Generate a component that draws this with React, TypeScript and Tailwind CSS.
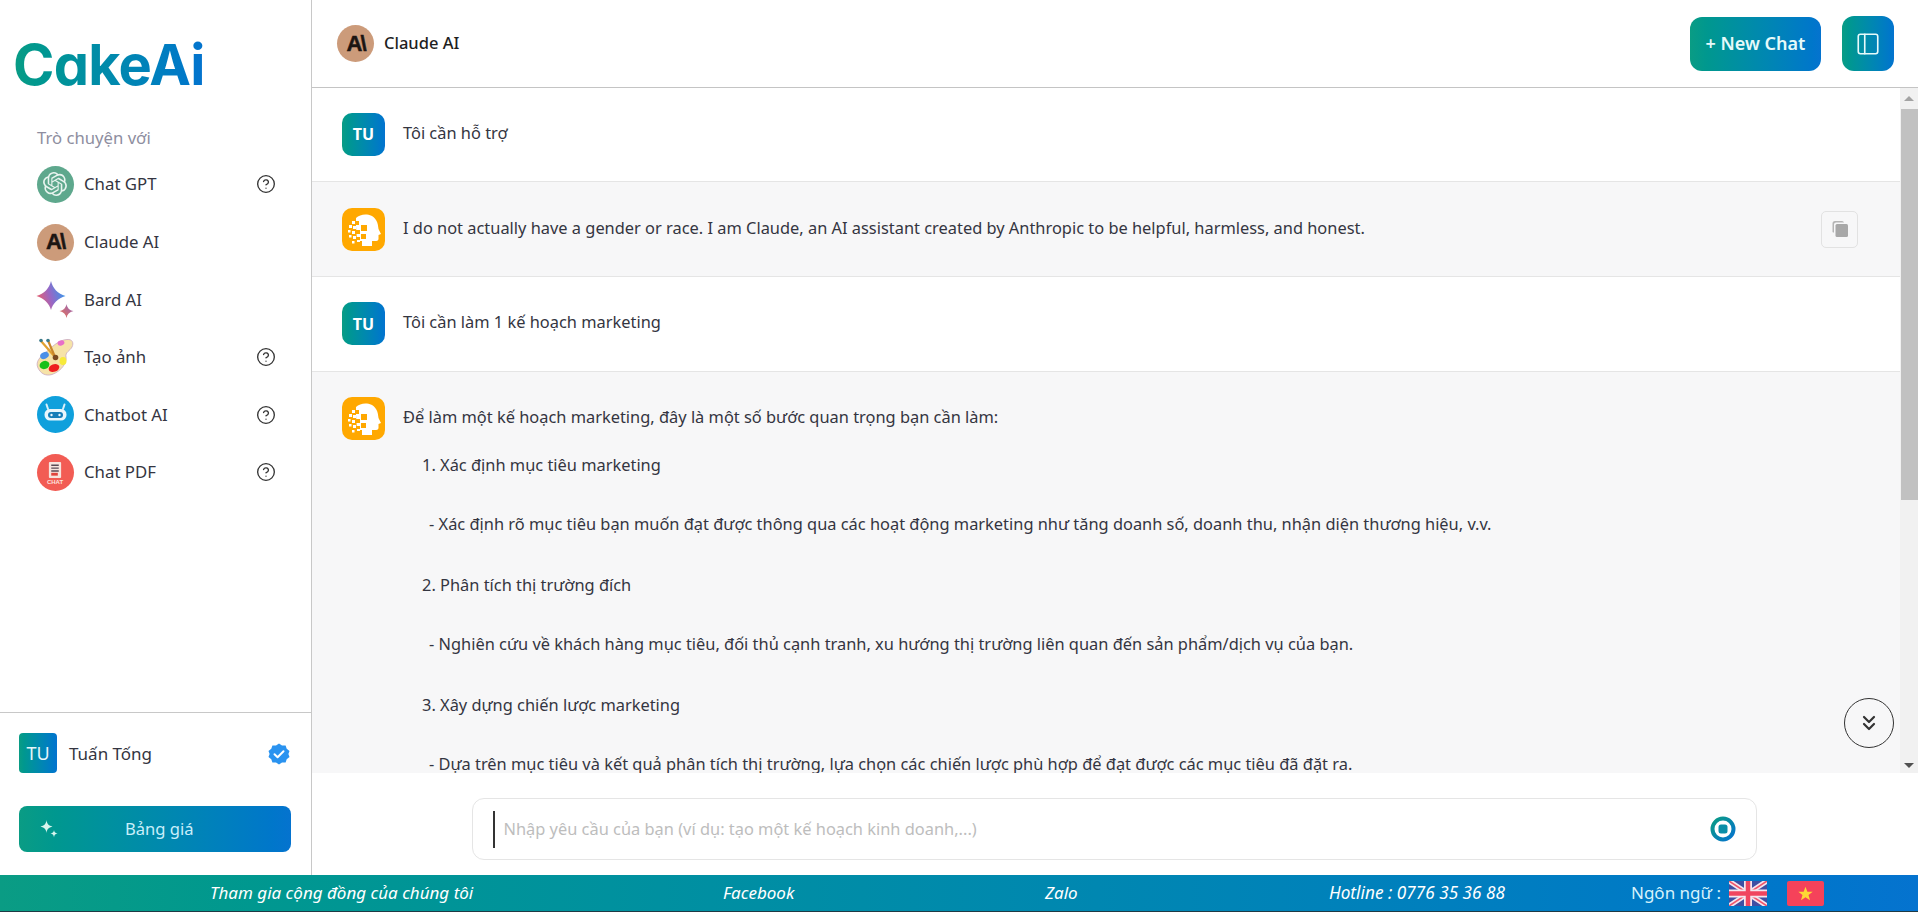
import React from 'react';
import { CircleHelp, ChevronsDown, PanelLeft } from 'lucide-react';
import { SiOpenai } from 'react-icons/si';

const ClaudeLogo = () => (
  <div className="w-[37px] h-[37px] rounded-full bg-[#cc9b7a] flex items-center justify-center">
    <span className="text-[#1c1512] text-[22px] font-bold tracking-[-2px] leading-none [-webkit-text-stroke:0.5px_#1c1512] font-['Liberation_Sans',sans-serif]">A\</span>
  </div>
);

const GptLogo = () => (
  <div className="w-[37px] h-[37px] rounded-full bg-[#5ea88d] flex items-center justify-center">
    <SiOpenai className="w-[24px] h-[24px] text-[#e8f4ef]" />
  </div>
);

const BardLogo = () => (
  <svg width="38" height="38" viewBox="0 0 38 38">
    <defs>
      <linearGradient id="bardA" x1="0" y1="0.6" x2="1" y2="0.3">
        <stop offset="0" stopColor="#ea5f6a" />
        <stop offset="0.45" stopColor="#9a66c4" />
        <stop offset="1" stopColor="#2f9bee" />
      </linearGradient>
      <linearGradient id="bardB" x1="0" y1="1" x2="1" y2="0">
        <stop offset="0" stopColor="#ee7050" />
        <stop offset="1" stopColor="#9168c0" />
      </linearGradient>
    </defs>
    <path d="M15 0 C16.500 7 22 13 29.500 15 C22 17 16.500 23 15 29 C13.500 23 8 17 0.500 15 C8 13 13.500 7 15 0Z" fill="url(#bardA)" />
    <path d="M30.500 23 C31 26.500 33.500 29.500 37.500 30 C33.500 31 31 33.500 30.500 37 C30 33.500 27.500 31 23.500 30 C27.500 29.500 30 26.500 30.500 23Z" fill="url(#bardB)" />
  </svg>
);

const PaletteLogo = () => (
  <svg width="38" height="38" viewBox="0 0 38 38">
    <path d="M2 30 C-1 24 4 19 9 15 C15 10 22 2 31 1.500 C36.500 1 38 5 36 9 C34 13 29 14 30 19 C31 24 26 33 16 36.500 C9 38.500 4.500 35 2 30Z" fill="#f6e3a8" stroke="#c9a8c0" strokeWidth="0.8" />
    <ellipse cx="8.500" cy="17.500" rx="4.500" ry="3.300" fill="#4a8fe8" transform="rotate(-25 8.500 17.500)" />
    <ellipse cx="8.500" cy="27" rx="5" ry="4" fill="#18c018" transform="rotate(-20 8.500 27)" />
    <ellipse cx="18" cy="30" rx="5.500" ry="3.800" fill="#ee2020" transform="rotate(-20 18 30)" />
    <ellipse cx="27" cy="23" rx="3.500" ry="4" fill="#f7ea3a" />
    <ellipse cx="25" cy="5" rx="3.500" ry="2.500" fill="#e86fc8" transform="rotate(-15 25 5)" />
    <path d="M5 3 L19 19" stroke="#e0a030" strokeWidth="2.200" />
    <path d="M12 2.500 L19 19" stroke="#c8862a" strokeWidth="2.200" />
    <circle cx="19.500" cy="19.500" r="2.800" fill="#7a4a20" />
    <circle cx="5" cy="2.500" r="1.800" fill="#3a7a8a" />
    <circle cx="12" cy="2.500" r="1.800" fill="#3a7a8a" />
  </svg>
);

const ChatbotLogo = () => (
  <svg width="37" height="37" viewBox="0 0 37 37">
    <circle cx="18.500" cy="18.500" r="18.500" fill="#0fa0dc" />
    <path d="M9.500 8.500 L11 13 M27.500 8.500 L26 13" stroke="#d8f0fa" strokeWidth="2" strokeLinecap="round" />
    <rect x="7.500" y="13" width="22" height="11.500" rx="5.500" fill="#e8f6fc" />
    <rect x="11" y="16" width="15" height="6" rx="3" fill="#157db8" />
    <circle cx="14.500" cy="19" r="1.200" fill="#e8f6fc" />
    <circle cx="22.500" cy="19" r="1.200" fill="#e8f6fc" />
  </svg>
);

const PdfLogo = () => (
  <div className="w-[37px] h-[37px] rounded-full bg-[#f25c54] flex flex-col items-center pt-[8px]">
    <svg width="14" height="16" viewBox="0 0 14 17">
      <rect x="0.500" y="0" width="13" height="17" rx="1" fill="#f7e4de" />
      <path d="M3 3.500H11M3 6.500H11M3 9.500H11" stroke="#5b4a55" strokeWidth="1.500" />
      <rect x="3" y="11.500" width="7" height="3" fill="#e0443c" />
    </svg>
    <span className="text-[6px] leading-[8px] font-bold text-[#fde3df] font-['Liberation_Sans',sans-serif]">CHAT</span>
  </div>
);

const HeadLogo = () => (
  <div className="w-[43px] h-[43px] rounded-[10px] bg-[#ffa800] shrink-0">
    <svg width="43" height="43" viewBox="0 0 43 43">
      <path d="M14 10 C19 5 30 5 34 12 C36 15 36 18 36.500 21 L39 26 L36.500 27 L36.500 31 C36.500 33.500 33 33 30 33 L30 38 L16 38 L15 33 L14 18Z" fill="#fff" />
      <g fill="#ffa800">
        <rect x="13" y="13" width="4" height="4" />
        <rect x="19" y="17" width="6" height="6" />
        <rect x="14" y="22" width="4" height="4" />
        <rect x="19" y="26" width="5" height="5" />
        <rect x="14" y="29" width="4" height="3" />
        <rect x="15" y="33" width="5" height="5" />
      </g>
      <g fill="#fff">
        <rect x="10" y="13" width="3" height="3" />
        <rect x="7" y="17" width="3" height="3" />
        <rect x="11" y="18" width="3" height="3" />
        <rect x="15" y="18" width="3" height="3" />
        <rect x="6" y="22" width="2.500" height="2.500" />
        <rect x="10" y="23" width="3" height="3" />
        <rect x="7" y="27" width="2.500" height="2.500" />
        <rect x="11" y="28" width="3" height="3" />
        <rect x="15" y="27" width="3" height="2" />
        <rect x="10" y="33" width="2.500" height="2.500" />
        <rect x="15" y="32" width="3" height="2" />
      </g>
    </svg>
  </div>
);

const VerifiedBadge = () => (
  <svg width="22" height="22" viewBox="0 0 22 22">
    <path d="M11 0.500 L14 2.500 L17.600 2.400 L18.700 5.800 L21.500 8 L20.400 11 L21.500 14 L18.700 16.200 L17.600 19.600 L14 19.500 L11 21.500 L8 19.500 L4.400 19.600 L3.300 16.200 L0.500 14 L1.600 11 L0.500 8 L3.300 5.800 L4.400 2.400 L8 2.500Z" fill="#2a93f0" />
    <path d="M6.500 11.200 L9.600 14.200 L15.500 8.200" fill="none" stroke="#fff" strokeWidth="2" strokeLinecap="round" strokeLinejoin="round" />
  </svg>
);

const Sparkles = () => (
  <svg width="18" height="18" viewBox="0 0 18 18" fill="#d8f5ee">
    <path d="M6.500 0 C7 4 8.500 5.500 12.500 6.500 C8.500 7.500 7 9 6.500 13 C6 9 4.500 7.500 0.500 6.500 C4.500 5.500 6 4 6.500 0Z" />
    <path d="M14 10 C14.200 12 15 13 17.500 13.500 C15 14 14.200 15 14 17.500 C13.800 15 13 14 10.500 13.500 C13 13 13.800 12 14 10Z" />
  </svg>
);

const UkFlag = () => (
  <svg width="38" height="25" viewBox="0 0 38 25">
    <rect width="38" height="25" fill="#3f4fa3" />
    <path d="M0 0 L38 25 M38 0 L0 25" stroke="#f4e6ee" strokeWidth="5" />
    <path d="M0 0 L38 25 M38 0 L0 25" stroke="#f0556a" strokeWidth="1.600" />
    <path d="M19 0 V25 M0 12.500 H38" stroke="#f4e6ee" strokeWidth="8" />
    <path d="M19 0 V25 M0 12.500 H38" stroke="#f0455f" strokeWidth="4.500" />
  </svg>
);

const VnFlag = () => (
  <div className="w-[37px] h-[25px] rounded-[2px] bg-[#f5425a] flex items-center justify-center">
    <svg width="15" height="15" viewBox="0 0 24 24" fill="#fdd835">
      <path d="M12 1 L15 9 L23.500 9.300 L16.800 14.500 L19.200 22.800 L12 18 L4.800 22.800 L7.200 14.500 L0.500 9.300 L9 9Z" />
    </svg>
  </div>
);

const bots = [
  { name: 'Chat GPT', icon: <GptLogo />, help: true, h: 'h-[58px]' },
  { name: 'Claude AI', icon: <ClaudeLogo />, help: false, h: 'h-[58px]' },
  { name: 'Bard AI', icon: <BardLogo />, help: false, h: 'h-[57px]' },
  { name: 'Tạo ảnh', icon: <PaletteLogo />, help: true, h: 'h-[58px]' },
  { name: 'Chatbot AI', icon: <ChatbotLogo />, help: true, h: 'h-[57px]' },
  { name: 'Chat PDF', icon: <PdfLogo />, help: true, h: 'h-[58px]' },
];

const steps = [
  { text: '1. Xác định mục tiêu marketing', cls: 'pl-[19px] h-[59px]' },
  { text: '- Xác định rõ mục tiêu bạn muốn đạt được thông qua các hoạt động marketing như tăng doanh số, doanh thu, nhận diện thương hiệu, v.v.', cls: 'pl-[26px] h-[61px]' },
  { text: '2. Phân tích thị trường đích', cls: 'pl-[19px] h-[59px]' },
  { text: '- Nghiên cứu về khách hàng mục tiêu, đối thủ cạnh tranh, xu hướng thị trường liên quan đến sản phẩm/dịch vụ của bạn.', cls: 'pl-[26px] h-[61px]' },
  { text: '3. Xây dựng chiến lược marketing', cls: 'pl-[19px] h-[59px]' },
  { text: '- Dựa trên mục tiêu và kết quả phân tích thị trường, lựa chọn các chiến lược phù hợp để đạt được các mục tiêu đã đặt ra.', cls: 'pl-[26px] h-[60px]' },
];

const TuAvatar = () => (
  <div className="w-[43px] h-[43px] -mt-[1px] rounded-[10px] bg-gradient-to-r from-[#0a9c84] to-[#0573cf] flex items-center justify-center text-white font-bold text-[16px] shrink-0">TU</div>
);

export default function App() {
  return (
    <div className="w-[1918px] h-[912px] flex flex-col overflow-hidden bg-white text-[#343541] text-[16px] font-['Noto_Sans','Open_Sans',sans-serif]">
      <div className="flex flex-1 min-h-0">
        {/* sidebar */}
        <aside className="w-[312px] shrink-0 border-r border-[#c8c8c8] flex flex-col">
          <div className="h-[125px] pl-[13px] pt-[29px] shrink-0">
            <span className="text-[56px] leading-[72px] font-bold tracking-[-0.8px] [font-feature-settings:'cv11'] bg-gradient-to-r from-[#0a9c84] to-[#0573cf] bg-clip-text text-transparent font-['Inter',sans-serif]">CakeAi</span>
          </div>
          <div className="pl-[37px] text-[#8e8ea0] text-[16.700px] h-[30px] leading-[26px]">Trò chuyện với</div>
          <div className="flex flex-col text-[16.800px]">
            {bots.map(b => (
              <div key={b.name} className={`flex items-center pl-[36px] pr-[35px] ${b.h}`}>
                <div className="w-[38px] flex justify-center">{b.icon}</div>
                <span className="ml-[10px] flex-1">{b.name}</span>
                {b.help && <CircleHelp className="w-[20px] h-[20px] text-[#333]" strokeWidth={1.6} />}
              </div>
            ))}
          </div>
          <div className="mt-auto border-t border-[#c8c8c8] h-[163px] px-[19px] pt-[20px]">
            <div className="flex items-center h-[40px]">
              <div className="w-[38px] h-[40px] rounded-[4px] bg-gradient-to-r from-[#0a9c84] to-[#0573cf] flex items-center justify-center text-[#e6f6fa] text-[18px]">TU</div>
              <span className="ml-[12px] flex-1 text-[17px] mt-[1px]">Tuấn Tống</span>
              <div className="mr-[2px] mt-[2px]"><VerifiedBadge /></div>
            </div>
            <div className="mt-[33px] h-[46px] w-[272px] rounded-[8px] bg-gradient-to-r from-[#0a9c84] to-[#0573cf] flex items-center pl-[21px]">
              <Sparkles />
              <span className="ml-[67px] text-[16.600px] text-[#c9eefa]">Bảng giá</span>
            </div>
          </div>
        </aside>

        {/* main */}
        <main className="flex-1 min-w-0 flex flex-col">
          <header className="h-[88px] shrink-0 border-b border-[#c4c4c4] flex items-center pl-[25px] pr-[24px]">
            <ClaudeLogo />
            <span className="ml-[10px] text-[#1f1f1f] font-medium text-[16.500px]">Claude AI</span>
            <button className="ml-auto w-[131px] h-[54px] rounded-[12px] bg-gradient-to-r from-[#0a9c84] to-[#0573cf] text-[#e6fafa] font-semibold text-[18px]">+ New Chat</button>
            <button className="ml-[21px] w-[52px] h-[55px] rounded-[12px] bg-gradient-to-r from-[#0a9c84] to-[#0573cf] flex items-center justify-center">
              <PanelLeft className="w-[26px] h-[26px] text-[#e6fafa]" strokeWidth={1.5} />
            </button>
          </header>

          <div className="flex-1 min-h-0 flex relative">
            <div className="flex-1 min-w-0 overflow-hidden text-[16.400px]">
              <div className="h-[94px] border-b border-[#e5e5e5] flex items-center pl-[30px]">
                <TuAvatar />
                <span className="ml-[18px] -mt-[3px]">Tôi cần hỗ trợ</span>
              </div>
              <div className="h-[95px] border-b border-[#e5e5e5] bg-[#f7f7f8] flex items-center pl-[30px] pr-[42px]">
                <HeadLogo />
                <span className="ml-[18px] flex-1 -mt-[2px]">I do not actually have a gender or race. I am Claude, an AI assistant created by Anthropic to be helpful, harmless, and honest.</span>
                <div className="w-[37px] h-[37px] rounded-[5px] border border-[#e2e2e2] flex items-center justify-center">
                  <svg width="18" height="18" viewBox="0 0 18 18">
                    <path d="M1.500 12 V3.500 a2.500 2.500 0 0 1 2.500 -2.500 H11 a2 2 0 0 1 2 1.500 H5 a2 2 0 0 0 -2 2 V12.500 a2 2 0 0 1 -1.500 -.5Z" fill="#b5b5b5" />
                    <rect x="4.500" y="4" width="12.500" height="13" rx="1.500" fill="#a8a8a8" />
                  </svg>
                </div>
              </div>
              <div className="h-[95px] border-b border-[#e5e5e5] flex items-center pl-[30px]">
                <TuAvatar />
                <span className="ml-[18px] -mt-[3px]">Tôi cần làm 1 kế hoạch marketing</span>
              </div>
              <div className="bg-[#f7f7f8] flex items-start pl-[30px] pt-[25px] h-[402px]">
                <HeadLogo />
                <div className="ml-[18px] leading-[24px]">
                  <div className="h-[44px] pt-[8px]">Để làm một kế hoạch marketing, đây là một số bước quan trọng bạn cần làm:</div>
                  {steps.map(s => (
                    <div key={s.text} className={`${s.cls} pt-[12px]`}>{s.text}</div>
                  ))}
                </div>
              </div>
            </div>

            {/* scrollbar */}
            <div className="w-[18px] shrink-0 bg-[#f1f1f1] flex flex-col items-center">
              <div className="h-[21px] w-full flex items-center justify-center">
                <div className="w-0 h-0 border-x-[5px] border-x-transparent border-b-[5px] border-b-[#a3a3a3]" />
              </div>
              <div className="h-[391px] w-[17px] bg-[#c1c1c1]" />
              <div className="mt-auto h-[16px] w-full flex items-center justify-center">
                <div className="w-0 h-0 border-x-[5px] border-x-transparent border-t-[5px] border-t-[#505050]" />
              </div>
            </div>

            <div className="absolute right-[24px] bottom-[25px] w-[50px] h-[50px] rounded-full border border-[#333] flex items-center justify-center">
              <ChevronsDown className="w-[24px] h-[24px] text-[#333]" strokeWidth={2.2} />
            </div>
          </div>

          {/* input */}
          <div className="h-[102px] shrink-0 bg-white flex justify-center pt-[25px]">
            <div className="w-[1285px] h-[62px] -ml-[2px] rounded-[12px] border border-[#e5e5e5] flex items-center pl-[20px] pr-[20px]">
              <div className="w-[2px] h-[37px] bg-[#333]" />
              <span className="ml-[9px] mt-[1px] text-[#bdbdbd] text-[16.400px] flex-1">Nhập yêu cầu của bạn (ví dụ: tạo một kế hoạch kinh doanh,...)</span>
              <svg width="26" height="26" viewBox="0 0 26 26">
                <defs>
                  <linearGradient id="stopG" x1="0" y1="0" x2="1" y2="1">
                    <stop offset="0" stopColor="#0a9c84" />
                    <stop offset="1" stopColor="#0573cf" />
                  </linearGradient>
                </defs>
                <circle cx="13" cy="13" r="10.500" fill="none" stroke="url(#stopG)" strokeWidth="4" />
                <rect x="8.500" y="8.500" width="9" height="9" rx="2.500" fill="#0a8ea8" />
              </svg>
            </div>
          </div>
        </main>
      </div>

      {/* footer */}
      <footer className="h-[37px] shrink-0 border-b border-[#1f3a44] bg-gradient-to-r from-[#0a9c84] to-[#0573cf] flex items-center italic text-white text-[17px]">
        <span className="ml-[210px] w-[513px]">Tham gia cộng đồng của chúng tôi</span>
        <span className="w-[322px]">Facebook</span>
        <span className="w-[284px]">Zalo</span>
        <span className="w-[302px] text-[17.200px]">Hotline : 0776 35 36 88</span>
        <span className="not-italic text-[#d6f2fb] w-[98px]">Ngôn ngữ :</span>
        <UkFlag />
        <div className="ml-[20px]"><VnFlag /></div>
      </footer>
    </div>
  );
}
